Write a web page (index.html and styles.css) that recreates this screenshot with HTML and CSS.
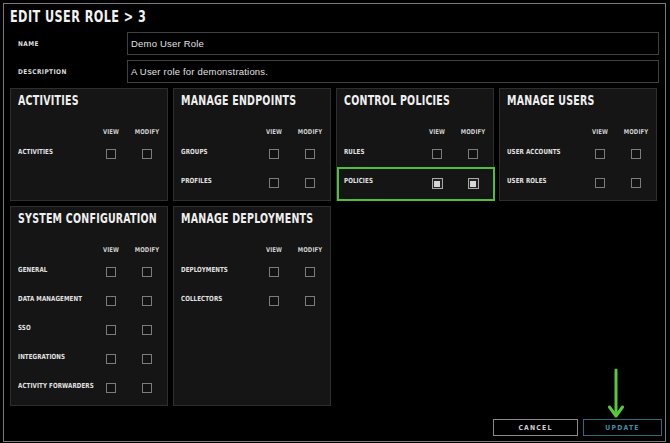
FILE: index.html
```html
<!DOCTYPE html>
<html>
<head>
<meta charset="utf-8">
<link rel="stylesheet" href="styles.css">
</head>
<body>
<div class="modal">
  <h1 class="title"><span class="squeeze">EDIT USER ROLE &gt; 3</span></h1>
  <div class="form-row">
    <label class="form-label">NAME</label>
    <div class="input">Demo User Role</div>
  </div>
  <div class="form-row">
    <label class="form-label">DESCRIPTION</label>
    <div class="input">A User role for demonstrations.</div>
  </div>

  <div class="cards">
    <section class="card">
      <h2 class="card-title"><span class="squeeze">ACTIVITIES</span></h2>
      <div class="perm-head"><span></span><span>VIEW</span><span>MODIFY</span></div>
      <div class="perm-rows">
        <div class="perm-row"><span class="perm-label">ACTIVITIES</span><i class="cb"></i><i class="cb"></i></div>
      </div>
    </section>
    <section class="card">
      <h2 class="card-title"><span class="squeeze">MANAGE ENDPOINTS</span></h2>
      <div class="perm-head"><span></span><span>VIEW</span><span>MODIFY</span></div>
      <div class="perm-rows">
        <div class="perm-row"><span class="perm-label">GROUPS</span><i class="cb"></i><i class="cb"></i></div>
        <div class="perm-row"><span class="perm-label">PROFILES</span><i class="cb"></i><i class="cb"></i></div>
      </div>
    </section>
    <section class="card">
      <h2 class="card-title"><span class="squeeze">CONTROL POLICIES</span></h2>
      <div class="perm-head"><span></span><span>VIEW</span><span>MODIFY</span></div>
      <div class="perm-rows">
        <div class="perm-row"><span class="perm-label">RULES</span><i class="cb"></i><i class="cb"></i></div>
        <div class="perm-row highlight"><span class="perm-label">POLICIES</span><i class="cb on"></i><i class="cb on"></i></div>
      </div>
    </section>
    <section class="card">
      <h2 class="card-title"><span class="squeeze">MANAGE USERS</span></h2>
      <div class="perm-head"><span></span><span>VIEW</span><span>MODIFY</span></div>
      <div class="perm-rows">
        <div class="perm-row"><span class="perm-label">USER ACCOUNTS</span><i class="cb"></i><i class="cb"></i></div>
        <div class="perm-row"><span class="perm-label">USER ROLES</span><i class="cb"></i><i class="cb"></i></div>
      </div>
    </section>
    <section class="card">
      <h2 class="card-title"><span class="squeeze">SYSTEM CONFIGURATION</span></h2>
      <div class="perm-head"><span></span><span>VIEW</span><span>MODIFY</span></div>
      <div class="perm-rows">
        <div class="perm-row"><span class="perm-label">GENERAL</span><i class="cb"></i><i class="cb"></i></div>
        <div class="perm-row"><span class="perm-label">DATA MANAGEMENT</span><i class="cb"></i><i class="cb"></i></div>
        <div class="perm-row"><span class="perm-label">SSO</span><i class="cb"></i><i class="cb"></i></div>
        <div class="perm-row"><span class="perm-label">INTEGRATIONS</span><i class="cb"></i><i class="cb"></i></div>
        <div class="perm-row"><span class="perm-label">ACTIVITY FORWARDERS</span><i class="cb"></i><i class="cb"></i></div>
      </div>
    </section>
    <section class="card">
      <h2 class="card-title"><span class="squeeze">MANAGE DEPLOYMENTS</span></h2>
      <div class="perm-head"><span></span><span>VIEW</span><span>MODIFY</span></div>
      <div class="perm-rows">
        <div class="perm-row"><span class="perm-label">DEPLOYMENTS</span><i class="cb"></i><i class="cb"></i></div>
        <div class="perm-row"><span class="perm-label">COLLECTORS</span><i class="cb"></i><i class="cb"></i></div>
      </div>
    </section>
  </div>

  <div class="actions">
    <button class="btn btn-cancel">CANCEL</button>
    <button class="btn btn-update">UPDATE</button>
  </div>

  <svg class="arrow" width="16" height="52" viewBox="0 0 16 52">
    <path d="M8 2 V47" stroke="#5cc63c" stroke-width="3" stroke-linecap="round" fill="none"/>
    <path d="M1.5 39 L8 48 L14.5 39" stroke="#5cc63c" stroke-width="3" stroke-linecap="round" stroke-linejoin="round" fill="none"/>
  </svg>
</div>
</body>
</html>
```
FILE: styles.css
```css
* { box-sizing: border-box; }
html, body { margin: 0; }
body {
  background: #000;
  width: 670px;
  height: 443px;
  overflow: hidden;
  padding: 3px;
  font-family: "DejaVu Sans Condensed", "DejaVu Sans", sans-serif;
  color: #ddd;
}
.modal {
  position: relative;
  width: 663px;
  height: 439px;
  border: 1px solid #7a7a7a;
  padding: 4px 3px 0 6px;
}
.squeeze {
  display: inline-block;
  white-space: nowrap;
  transform-origin: 0 50%;
}
.title {
  margin: 0;
  font-size: 15.5px;
  line-height: 18px;
  font-weight: bold;
  letter-spacing: 0.5px;
  color: #f2f2f2;
  white-space: nowrap;
}
.title .squeeze { transform: scaleX(0.81); }
.form-row {
  display: flex;
  align-items: center;
  height: 23px;
  margin-top: 5px;
  padding-left: 8px;
}
.title + .form-row { margin-top: 6px; }
.form-label {
  width: 109px;
  font-size: 6.5px;
  font-weight: bold;
  letter-spacing: 0.4px;
  color: #dcdcdc;
}
.input {
  width: 532px;
  height: 23px;
  border: 1px solid #404040;
  background: #000;
  padding: 0 3px;
  font-family: "Liberation Sans", sans-serif;
  font-size: 9.5px;
  line-height: 21px;
  letter-spacing: 0.2px;
  color: #e0e0e0;
}
.cards {
  display: grid;
  grid-template-columns: repeat(4, 158px);
  column-gap: 5px;
  row-gap: 5px;
  margin-top: 5px;
}
.card {
  background: #151515;
  border: 1px solid #2e2e2e;
  padding: 3px 2px 12px 7px;
}
.card-title {
  margin: 0;
  font-size: 13.5px;
  line-height: 16px;
  font-weight: bold;
  letter-spacing: 0.3px;
  color: #efefef;
  white-space: nowrap;
}
.card-title .squeeze { transform: scaleX(0.78); }
.perm-head, .perm-row {
  display: grid;
  grid-template-columns: minmax(0, 1fr) 36px 36px;
  align-items: start;
}
.perm-head {
  margin-top: 21px;
  margin-bottom: 14px;
  height: 6px;
  font-size: 6.6px;
  line-height: 6px;
  font-weight: bold;
  letter-spacing: 0.1px;
  color: #cfcfcf;
}
.perm-head span {
  text-align: center;
  white-space: nowrap;
  transform: scaleX(0.9);
}
.perm-rows {
  display: flex;
  flex-direction: column;
  gap: 19px;
}
.perm-row { height: 10px; position: relative; }
.perm-label {
  font-size: 7px;
  line-height: 6px;
  font-weight: bold;
  letter-spacing: 0.1px;
  color: #e2e2e2;
  white-space: nowrap;
  transform: scaleX(0.88);
  transform-origin: 0 50%;
}
.cb {
  justify-self: center;
  width: 10px;
  height: 10px;
  border: 1px solid #7c7c7c;
  background: #121212;
  position: relative;
}
.cb.on {
  width: 11px;
  height: 11px;
  border: 1px solid #a8a8a8;
  background: #222;
}
.cb.on::after {
  content: "";
  position: absolute;
  left: 1.5px;
  top: 1.5px;
  width: 6px;
  height: 6px;
  background: #d6d6d6;
}
.highlight::before {
  content: "";
  position: absolute;
  left: -7px;
  right: -4px;
  top: -11px;
  bottom: -13px;
  border: 2px solid #4fbf3a;
}
.actions {
  display: flex;
  justify-content: flex-end;
  gap: 5px;
  margin-top: 13px;
}
.btn {
  height: 17px;
  background: #000;
  font-family: "DejaVu Sans Condensed", "DejaVu Sans", sans-serif;
  font-size: 6.8px;
  font-weight: bold;
  letter-spacing: 1.2px;
  padding: 0;
}
.btn-cancel {
  width: 85px;
  border: 1px solid #8a8a8a;
  color: #d0d0d0;
}
.btn-update {
  width: 79px;
  border: 1px solid #2b6b7c;
  color: #3d91a6;
}
.arrow {
  position: absolute;
  left: 604px;
  top: 364px;
}
```
